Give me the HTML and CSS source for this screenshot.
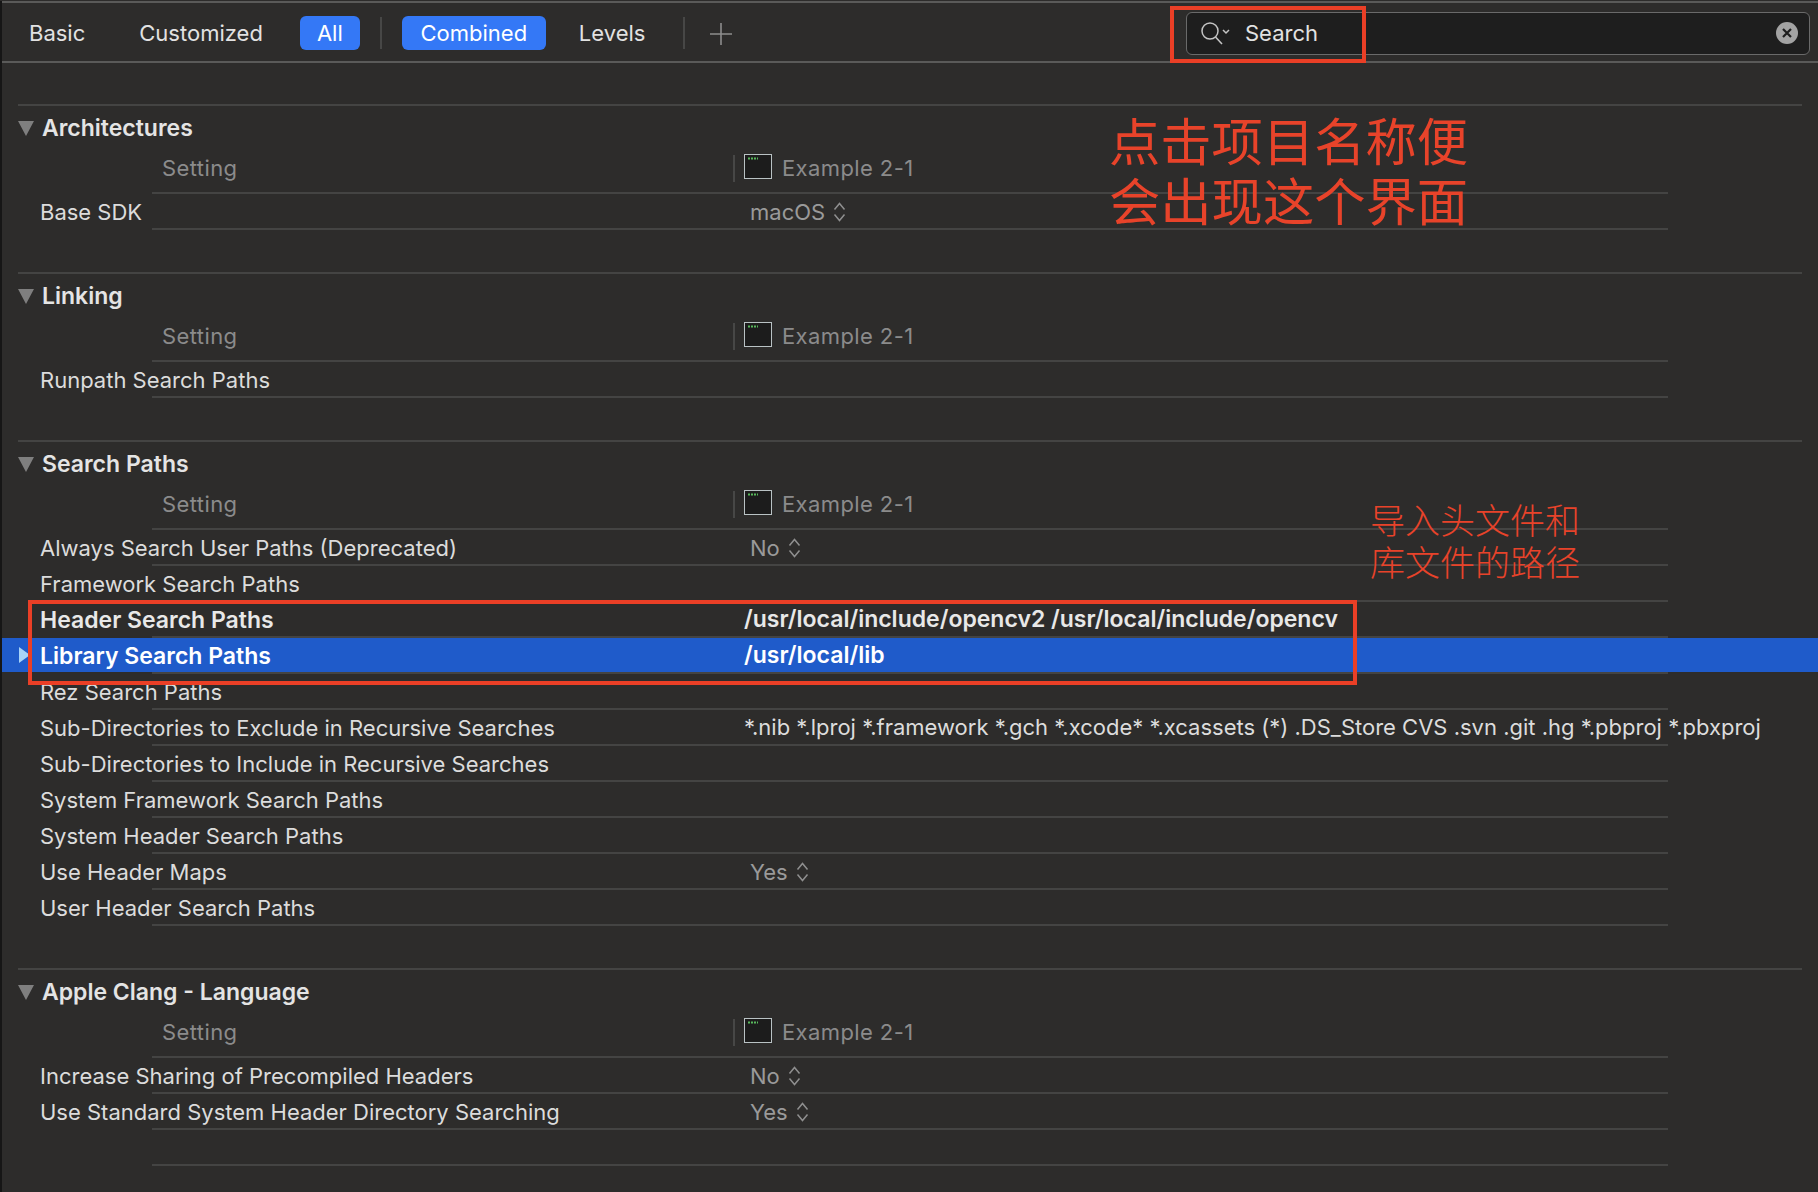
FILE: index.html
```html
<!DOCTYPE html>
<html lang="en">

<head>
    <meta charset="UTF-8">
    <title>Build Settings</title>
    <link rel="stylesheet" href="styles.css">
</head>

<body>
    <svg class="defs" width="0" height="0">
        <symbol id="term" viewBox="0 0 28 25">
            <rect x="0.5" y="0.5" width="27" height="24" fill="#1c1c1c" stroke="#b9c2c4" />
            <path d="M4 4.5 H14" stroke="#58b85c" stroke-width="2" stroke-dasharray="2 1" />
        </symbol>
        <symbol id="updown" viewBox="0 0 13 20">
            <path d="M1.5 7.5 L6.5 1.5 L11.5 7.5 M1.5 12.5 L6.5 18.5 L11.5 12.5" fill="none" stroke="#8f8f8f" stroke-width="1.5" />
        </symbol>
    </svg>

    <div class="window">
        <header class="toolbar">
            <span class="tab tab-basic">Basic</span>
            <span class="tab tab-custom">Customized</span>
            <span class="tab tab-on tab-all">All</span>
            <span class="sep sep-a"></span>
            <span class="tab tab-on tab-combined">Combined</span>
            <span class="tab tab-levels">Levels</span>
            <span class="sep sep-b"></span>
            <svg class="plus" width="22" height="22" viewBox="0 0 22 22">
                <path d="M11 0 V22 M0 11 H22" stroke="#8d8d8d" stroke-width="1.6" />
            </svg>
            <div class="search">
                <svg class="search-icon" width="32" height="24" viewBox="0 0 32 24">
                    <circle cx="10" cy="10" r="8" fill="none" stroke="#c4c4c4" stroke-width="1.5" />
                    <path d="M15.5 16 L22 23" stroke="#c4c4c4" stroke-width="1.6" />
                    <path d="M23 9 L26 12 L29 9" fill="none" stroke="#c4c4c4" stroke-width="1.5" />
                </svg>
                <span class="search-text">Search</span>
                <svg class="search-clear" width="22" height="22" viewBox="0 0 22 22">
                    <circle cx="11" cy="11" r="11" fill="#a3a3a3" />
                    <path d="M7 7 L15 15 M15 7 L7 15" stroke="#1e1e1e" stroke-width="2.2" />
                </svg>
            </div>
        </header>

        <main class="settings">
            <section class="group">
                <h2 class="group-head"><span class="tri"></span>Architectures</h2>
                <div class="row-setting">
                    <span class="setting-name">Setting</span>
                    <span class="setting-target"><span class="target-sep"></span><svg class="term" width="28" height="25"><use href="#term" /></svg>Example 2-1</span>
                </div>
                <div class="rule"></div>
                <div class="row"><span>Base SDK</span><span class="popup">macOS <svg class="updown" width="13" height="20"><use href="#updown" /></svg></span></div>
                <div class="rule"></div>
            </section>

            <section class="group">
                <h2 class="group-head"><span class="tri"></span>Linking</h2>
                <div class="row-setting">
                    <span class="setting-name">Setting</span>
                    <span class="setting-target"><span class="target-sep"></span><svg class="term" width="28" height="25"><use href="#term" /></svg>Example 2-1</span>
                </div>
                <div class="rule"></div>
                <div class="row"><span>Runpath Search Paths</span></div>
                <div class="rule"></div>
            </section>

            <section class="group">
                <h2 class="group-head"><span class="tri"></span>Search Paths</h2>
                <div class="row-setting">
                    <span class="setting-name">Setting</span>
                    <span class="setting-target"><span class="target-sep"></span><svg class="term" width="28" height="25"><use href="#term" /></svg>Example 2-1</span>
                </div>
                <div class="rule"></div>
                <div class="row"><span>Always Search User Paths (Deprecated)</span><span class="popup">No <svg class="updown" width="13" height="20"><use href="#updown" /></svg></span></div>
                <div class="rule"></div>
                <div class="row"><span>Framework Search Paths</span></div>
                <div class="rule"></div>
                <div class="row row-bold"><span>Header Search Paths</span><span class="path">/usr/local/include/opencv2 /usr/local/include/opencv</span></div>
                <div class="rule"></div>
                <div class="row row-bold row-sel"><span class="sel-tri"></span><span>Library Search Paths</span><span class="path">/usr/local/lib</span></div>
                <div class="rule"></div>
                <div class="row"><span>Rez Search Paths</span></div>
                <div class="rule"></div>
                <div class="row"><span>Sub-Directories to Exclude in Recursive Searches</span><span class="path">*.nib *.lproj *.framework *.gch *.xcode* *.xcassets (*) .DS_Store CVS .svn .git .hg *.pbproj *.pbxproj</span></div>
                <div class="rule"></div>
                <div class="row"><span>Sub-Directories to Include in Recursive Searches</span></div>
                <div class="rule"></div>
                <div class="row"><span>System Framework Search Paths</span></div>
                <div class="rule"></div>
                <div class="row"><span>System Header Search Paths</span></div>
                <div class="rule"></div>
                <div class="row"><span>Use Header Maps</span><span class="popup">Yes <svg class="updown" width="13" height="20"><use href="#updown" /></svg></span></div>
                <div class="rule"></div>
                <div class="row"><span>User Header Search Paths</span></div>
                <div class="rule"></div>
            </section>

            <section class="group">
                <h2 class="group-head"><span class="tri"></span>Apple Clang - Language</h2>
                <div class="row-setting">
                    <span class="setting-name">Setting</span>
                    <span class="setting-target"><span class="target-sep"></span><svg class="term" width="28" height="25"><use href="#term" /></svg>Example 2-1</span>
                </div>
                <div class="rule"></div>
                <div class="row"><span>Increase Sharing of Precompiled Headers</span><span class="popup">No <svg class="updown" width="13" height="20"><use href="#updown" /></svg></span></div>
                <div class="rule"></div>
                <div class="row"><span>Use Standard System Header Directory Searching</span><span class="popup">Yes <svg class="updown" width="13" height="20"><use href="#updown" /></svg></span></div>
                <div class="rule"></div>
                <div class="row"></div>
                <div class="rule"></div>
            </section>
        </main>

        <div class="mark mark-search"></div>
        <div class="mark mark-paths"></div>
        <p class="note note-big">点击项目名称便<br>会出现这个界面</p>
        <p class="note note-small">导入头文件和<br>库文件的路径</p>
    </div>
</body>

</html>
```

FILE: styles.css
```css
* {
    margin: 0;
    padding: 0;
    box-sizing: border-box;
}

body {
    width: 1818px;
    height: 1192px;
    overflow: hidden;
    background: #2d2c2b;
    font-family: 'Inter', 'Liberation Sans', sans-serif;
    font-size: 22px;
    color: #dcdcdc;
}

.defs {
    position: absolute;
}

.window {
    position: relative;
    height: 1192px;
    border-left: 2px solid #161616;
    background: #2d2c2b;
}

/* toolbar */
.toolbar {
    display: flex;
    align-items: center;
    height: 62px;
    margin-top: 1px;
    padding-top: 2px;
    border-top: 2px solid #5a5a59;
    border-bottom: 2px solid #5a5a59;
}

.tab {
    display: flex;
    align-items: center;
    justify-content: center;
    height: 34px;
    color: #e2e2e2;
}

.tab-on {
    background: #3478f6;
    border-radius: 6px;
    color: #fff;
}

.tab-basic {
    margin-left: 27px;
}

.tab-custom {
    margin-left: 54px;
}

.tab-all {
    width: 60px;
    margin-left: 37px;
}

.tab-combined {
    width: 144px;
    margin-left: 20px;
}

.tab-levels {
    margin-left: 33px;
}

.sep {
    width: 2px;
    height: 32px;
    background: #474746;
}

.sep-a {
    margin-left: 20px;
}

.sep-b {
    margin-left: 38px;
}

.plus {
    margin: 2px 0 0 25px;
}

.search {
    display: flex;
    align-items: center;
    width: 624px;
    height: 43px;
    margin-left: auto;
    margin-right: 8px;
    padding: 0 11px 0 13px;
    background: #1e1e1e;
    border: 1px solid #6a6a6a;
    border-radius: 6px;
}

.search-icon {
    flex: none;
}

.search-text {
    margin-left: 13px;
    color: #e2e2e2;
}

.search-clear {
    margin-left: auto;
}

/* setting groups */
.settings {
    padding-top: 41px;
}

.group {
    margin-bottom: 42px;
}

.group-head {
    display: flex;
    align-items: center;
    height: 46px;
    margin-left: 16px;
    width: 1784px;
    border-top: 2px solid #444443;
    font-size: 23px;
    font-weight: 600;
    color: #e4e4e4;
}

.tri {
    width: 0;
    height: 0;
    margin-right: 8px;
    border-left: 8px solid transparent;
    border-right: 8px solid transparent;
    border-top: 15px solid #7f7f7f;
}

.row-setting {
    display: flex;
    align-items: center;
    height: 42px;
    padding-bottom: 6px;
    letter-spacing: 0.4px;
    color: #8b8b8b;
}

.setting-name {
    width: 571px;
    margin-left: 160px;
}

.setting-target {
    display: flex;
    align-items: center;
}

.target-sep {
    width: 2px;
    height: 27px;
    margin-right: 9px;
    background: #474746;
}

.term {
    margin: -4px 10px 0 0;
}

.rule {
    width: 1516px;
    height: 2px;
    margin-left: 150px;
    background: #444443;
}

.row {
    position: relative;
    display: grid;
    grid-template-columns: 704px 1fr;
    justify-items: start;
    align-items: center;
    height: 34px;
    padding: 2px 0 0 38px;
    white-space: nowrap;
}

.row-bold {
    font-size: 23px;
    font-weight: 600;
    color: #e8e8e8;
}

.row-sel {
    background: #1f5bca;
    color: #fff;
}

.sel-tri {
    position: absolute;
    left: 17px;
    top: 9px;
    width: 0;
    height: 0;
    border-top: 8px solid transparent;
    border-bottom: 8px solid transparent;
    border-left: 11px solid #a8d4f8;
}

.popup {
    display: flex;
    align-items: center;
    gap: 8px;
    margin-left: 6px;
    color: #9a9a9a;
}

.path {
    margin-bottom: 3px;
}

/* red annotations */
.mark {
    position: absolute;
    border: 4px solid #ea3f26;
}

.mark-search {
    left: 1168px;
    top: 5px;
    width: 196px;
    height: 57px;
}

.mark-paths {
    left: 26px;
    top: 599px;
    width: 1329px;
    height: 85px;
}

.note {
    position: absolute;
    font-family: 'Noto Sans CJK SC', sans-serif;
    font-weight: 400;
    color: #e8432a;
}

.note-big {
    left: 1107px;
    top: 108px;
    font-size: 51.3px;
    line-height: 60px;
}

.note-small {
    left: 1368px;
    top: 497px;
    font-size: 35px;
    font-weight: 300;
    line-height: 42px;
}
```
